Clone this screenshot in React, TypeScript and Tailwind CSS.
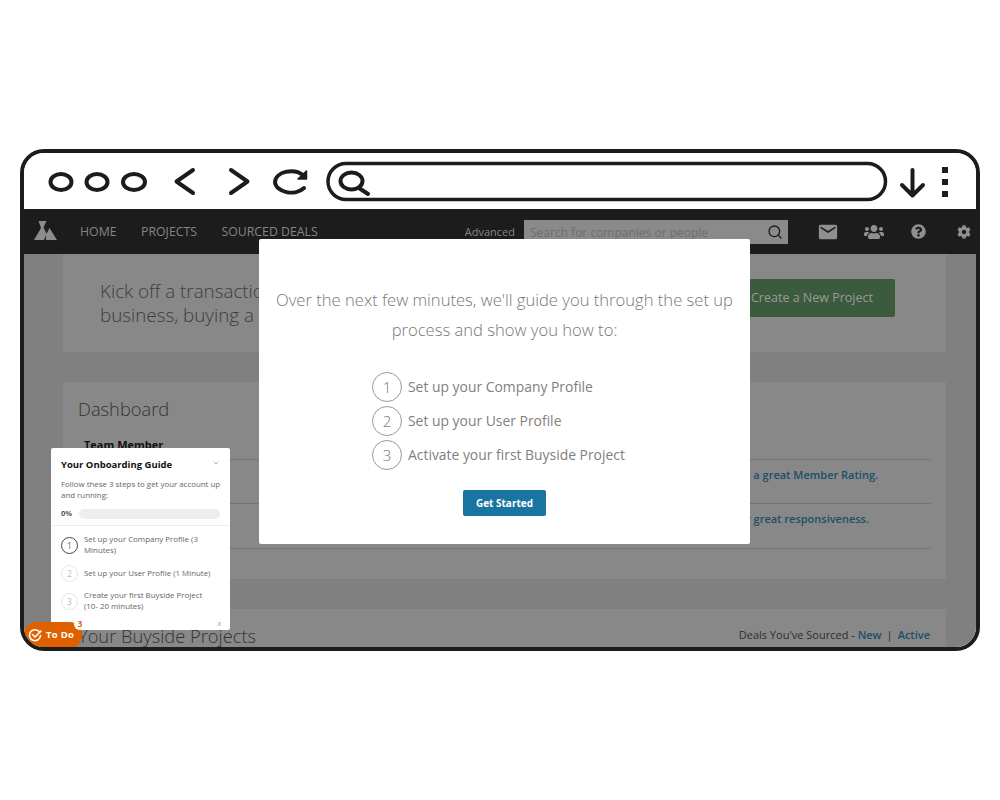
import React from 'react';
import { ChevronDown, Search } from 'lucide-react';
import { FaCog, FaQuestionCircle, FaUsers } from 'react-icons/fa';
import { MdEmail } from 'react-icons/md';

const sans = "font-['Open_Sans',sans-serif]";

const BrowserBar = () => (
  <div className="h-[56px] shrink-0 bg-white">
    <svg width="952" height="56" viewBox="24 153 952 56" fill="none" stroke="#1c1c1c" strokeWidth="4" strokeLinecap="round" strokeLinejoin="round">
      <ellipse cx="61" cy="182" rx="10.500" ry="8" />
      <ellipse cx="97" cy="182" rx="10.500" ry="8" />
      <ellipse cx="134" cy="182" rx="11" ry="8" />
      <path d="M193 170 L176.500 181.500 L193 193" />
      <path d="M231 170 L247.500 181.500 L231 193" />
      <path d="M304 188 A 16 11 0 0 1 275 182 A 16 11 0 0 1 303 175" />
      <path d="M306.500 171 L306.500 179 L298 179 Z" fill="#1c1c1c" strokeWidth="1.500" />
      <rect x="328" y="163.500" width="557.500" height="36" rx="18" strokeWidth="3.500" />
      <ellipse cx="351.500" cy="181" rx="11" ry="8.500" />
      <path d="M359 188 L368 194" />
      <path d="M912.500 170 L912.500 195 M902 185 L912.500 195.500 L923 185" />
      <path d="M945 170 L945 170.100 M945 182 L945 182.100 M945 194 L945 194.100" strokeWidth="6" strokeLinecap="square" />
    </svg>
  </div>
);

const TopNav = () => (
  <div className={`h-[45px] shrink-0 bg-[#1c1c1c] flex items-center pl-[10px] ${sans}`}>
    <svg width="24" height="20" viewBox="0 0 24 20" className="shrink-0 -mt-[2px]">
      <path d="M4.500 0 H12.500 L9.500 6.500 L12.500 12.500 L10 19 H0 L7 7 Z" fill="#8c8c8c" />
      <path d="M15.500 7 L23 19 H12 L11.500 14 L13.500 11 Z" fill="#8c8c8c" />
    </svg>
    <div className="ml-[22px] mt-[2px] flex gap-[24.500px] text-[12.300px] text-[#858585]">
      <span>HOME</span>
      <span>PROJECTS</span>
      <span>SOURCED DEALS</span>
    </div>
    <span className="ml-auto mt-[2px] text-[11px] text-[#858585]">Advanced</span>
    <div className="ml-[9px] w-[264px] h-[24px] bg-[#8a8a8a] flex items-center justify-between pl-[6px] pr-[5px] text-[12px] text-[#6e6e6e]">
      <span className="mt-[2px]">Search for companies or people</span>
      <Search className="w-4 h-4 text-[#1c1c1c]" />
    </div>
    <div className="ml-[29px] mr-[5px] flex items-center text-[#8f8f8f]">
      <MdEmail className="w-[22px] h-[22px]" />
      <FaUsers className="w-[20px] h-[20px] ml-[25px]" />
      <FaQuestionCircle className="w-[15px] h-[15px] ml-[27px]" />
      <FaCog className="w-[14px] h-[14px] ml-[31px]" />
    </div>
  </div>
);

const Page = () => (
  <div className={`flex-1 min-h-0 bg-[#808080] pl-[39px] pr-[30px] flex flex-col gap-[30px] overflow-hidden ${sans}`}>
    <div className="h-[98px] shrink-0 bg-[#888888] flex items-start justify-between pl-[37px] pr-[51px] pt-[25px]">
      <p className="text-[18.800px] leading-[24px] font-light text-[#3d3d3d] w-[400px]">
        Kick off a transaction for your<br />business, buying a business
      </p>
      <div className="h-[38px] w-[163px] bg-[#3c5a3c] rounded-[2px] flex items-center pl-[19px] pt-[1px] text-[12.500px] font-medium text-[#9a9a9a]">
        Create a New Project
      </div>
    </div>
    <div className="h-[197px] shrink-0 bg-[#888888] pl-[15px] pr-[15px] pt-[14px]">
      <h2 className="text-[18.300px] leading-[26px] font-light text-[#333333]">Dashboard</h2>
      <div className="mt-[15px] pl-[6px] text-[11px] leading-[16px] font-bold text-[#111111]">Team Member</div>
      <div className="mt-[6px] border-t border-[#737373] h-[44px] flex justify-end pr-[53px] pt-[7px] text-[11px] leading-[16px] font-semibold text-[#1b4f6b]">
        Earn a great Member Rating.
      </div>
      <div className="border-t border-[#737373] h-[45px] flex justify-end pr-[62px] pt-[7px] text-[11px] leading-[16px] font-semibold text-[#1b4f6b]">
        Show great responsiveness.
      </div>
      <div className="border-t border-[#737373]" />
    </div>
    <div className="h-[60px] shrink-0 bg-[#888888] flex items-start justify-between pl-[15px] pr-[16px] pt-[14px]">
      <h2 className="text-[18.300px] leading-[26px] font-light text-[#333333]">Your Buyside Projects</h2>
      <div className="text-[11px] leading-[24px] text-[#2e2e2e]">
        Deals You've Sourced - <span className="font-semibold text-[#1b4f6b]">New</span>
        <span className="mx-[5px]">|</span>
        <span className="font-semibold text-[#1b4f6b]">Active</span>
      </div>
    </div>
  </div>
);

const Modal = () => (
  <div className={`absolute left-[235px] top-[86px] w-[491px] h-[305px] bg-white rounded-[2px] flex flex-col items-center pt-[46px] ${sans}`}>
    <p className="text-[16.600px] leading-[30px] font-light text-[#777777] text-center whitespace-nowrap">
      Over the next few minutes, we'll guide you through the set up<br />process and show you how to:
    </p>
    <div className="mt-[27px] self-start ml-[113px] flex flex-col gap-[4px]">
      {['Set up your Company Profile', 'Set up your User Profile', 'Activate your first Buyside Project'].map((s, i) => (
        <div key={s} className="flex items-center gap-[6px]">
          <span className="w-[30px] h-[30px] rounded-full border border-[#9a9a9a] flex items-center justify-center text-[15px] font-light text-[#777777]">
            {i + 1}
          </span>
          <span className="text-[13.900px] text-[#808080]">{s}</span>
        </div>
      ))}
    </div>
    <button className="mt-[20px] w-[83px] h-[26px] pt-[1px] bg-[#1874a0] rounded-[2px] text-[10px] font-bold text-white">
      Get Started
    </button>
  </div>
);

const guideSteps = [
  ['Set up your Company Profile (3', 'Minutes)'],
  ['Set up your User Profile (1 Minute)'],
  ['Create your first Buyside Project', '(10- 20 minutes)'],
];

const Guide = () => (
  <div className={`absolute left-[27px] top-[295px] w-[179px] h-[182px] bg-white rounded-[2px] ${sans}`}>
    <div className="flex items-center justify-between pl-[10px] pr-[10px] pt-[10px]">
      <span className="text-[9.500px] leading-[13px] font-bold text-[#111111]">Your Onboarding Guide</span>
      <ChevronDown className="w-[8px] h-[8px] text-[#888888] -mt-[4px]" />
    </div>
    <p className="mt-[8px] px-[10px] text-[7.900px] leading-[11px] text-[#666666] whitespace-nowrap">
      Follow these 3 steps to get your account up<br />and running:
    </p>
    <div className="mt-[7px] px-[10px] flex items-center gap-[7px]">
      <span className="text-[7.500px] font-bold text-[#555555]">0%</span>
      <div className="flex-1 h-[10px] rounded-full bg-[#eeeeee]" />
    </div>
    <div className="mt-[6px] border-t border-[#eeeeee] pl-[10px] pr-[6px] pt-[8px] flex flex-col gap-[8px] text-[7.900px] leading-[11px] text-[#666666]">
      {guideSteps.map((lines, i) => (
        <div key={lines[0]} className="flex items-center gap-[6px] first:mb-[1px]">
          <span className={`w-[17px] h-[17px] shrink-0 rounded-full border flex items-center justify-center text-[8.500px] ${i === 0 ? 'border-[#444444] text-[#666666]' : 'border-[#e5e5e5] text-[#bbbbbb]'}`}>
            {i + 1}
          </span>
          <span className="whitespace-nowrap">
            {lines.map(l => (
              <span key={l} className="block">{l}</span>
            ))}
          </span>
        </div>
      ))}
    </div>
    <span className="absolute right-[9px] bottom-[1px] text-[7px] italic text-[#999999]">x</span>
  </div>
);

const TodoBadge = () => (
  <div className={`absolute left-0 top-[469px] w-[58px] h-[26px] bg-[#e06000] rounded-[12px] flex items-center pl-[4px] gap-[4px] ${sans}`}>
    <svg width="14" height="14" viewBox="0 0 14 14" fill="none" stroke="white" strokeWidth="1.600" strokeLinecap="round" strokeLinejoin="round">
      <path d="M11.500 4 A5.500 5.500 0 1 0 12.500 7.500" />
      <path d="M4.500 6.500 L7 9 L13 3" />
    </svg>
    <span className="text-[9.500px] font-bold tracking-[0.3px] text-white">To Do</span>
    <span className="absolute -right-[4px] -top-[4px] w-[12px] h-[12px] rounded-full bg-white flex items-center justify-center text-[8px] font-bold text-[#e06000]">3</span>
  </div>
);

export default function App() {
  return (
    <div className="min-h-[800px] bg-white pt-[149px] px-[20px]">
      <div className="relative w-[960px] h-[502px] border-4 border-[#1c1c1c] rounded-[24px] overflow-hidden flex flex-col">
        <BrowserBar />
        <TopNav />
        <Page />
        <Modal />
        <Guide />
        <TodoBadge />
      </div>
    </div>
  );
}
